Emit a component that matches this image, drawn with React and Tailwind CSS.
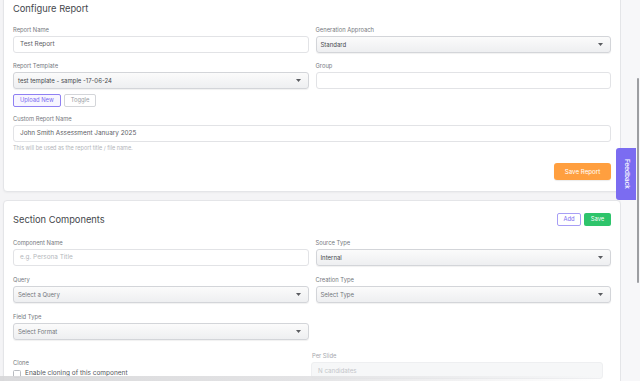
import React from "react";

function Label({ children, className = "" }) {
  return (
    <div className={"h-[9px] leading-[9px] text-[5.8px] text-[#75787e] mb-[2px] " + className}>
      {children}
    </div>
  );
}

function Input({ value, placeholder }) {
  return (
    <div className="h-[17px] rounded-[3px] border border-[#e2e3e6] bg-white flex items-center px-[6px] text-[6.4px]">
      {value ? (
        <span className="text-[#5d6066]">{value}</span>
      ) : (
        <span className="text-[#b4b7bc]">{placeholder}</span>
      )}
    </div>
  );
}

function Select({ value, muted }) {
  return (
    <div className="h-[17px] rounded-[3px] border border-[#d3d5d9] bg-gradient-to-b from-[#fbfbfb] to-[#eeeff1] shadow-[0_1px_1px_rgba(0,0,0,0.06)] flex items-center justify-between pl-[4px] pr-[7px] text-[6px]">
      <span className={muted ? "text-[#72757b]" : "text-[#45484d]"}>{value}</span>
      <svg width="5" height="3" viewBox="0 0 5 3">
        <path d="M0 0 L5 0 L2.5 3 Z" fill="#5a5c60" />
      </svg>
    </div>
  );
}

export default function App() {
  return (
    <div className="relative w-[640px] h-[381px] overflow-hidden bg-[#f4f4f6] font-['Inter',sans-serif]">
      <div className="flex">
        <div className="w-[621px] pl-[3px] -mt-[11px] flex flex-col gap-[8px]">
          {/* Card 1 */}
          <div className="rounded-[4px] border border-[#e4e5e8] bg-white px-[9px] pt-[12px] pb-[11px] shadow-[0_1px_2px_rgba(0,0,0,0.04)]">
            <div className="h-[13px] leading-[13px] text-[9.3px] text-[#45484d]">Configure Report</div>
            <div className="mt-[10px] grid grid-cols-2 gap-x-[7px] gap-y-[8px]">
              <div>
                <Label>Report Name</Label>
                <Input value="Test Report" />
              </div>
              <div>
                <Label>Generation Approach</Label>
                <Select value="Standard" />
              </div>
              <div>
                <Label>Report Template</Label>
                <Select value="test template - sample -17-06-24" />
                <div className="mt-[5px] flex gap-[3px]">
                  <div className="h-[13px] px-[6px] rounded-[2px] border border-[#8f80f3] bg-[#f7f5ff] text-[#7a6af0] text-[5.8px] flex items-center">
                    Upload New
                  </div>
                  <div className="h-[13px] px-[6px] rounded-[2px] border border-[#d3d5d9] bg-white text-[#9a9da3] text-[5.8px] flex items-center">
                    Toggle
                  </div>
                </div>
              </div>
              <div>
                <Label>Group</Label>
                <Input value="" placeholder="" />
              </div>
            </div>
            <div className="mt-[7px]">
              <Label>Custom Report Name</Label>
              <Input value="John Smith Assessment January 2025" />
              <div className="mt-[2px] h-[8px] leading-[8px] text-[5.5px] text-[#b2b5ba]">
                This will be used as the report title / file name.
              </div>
            </div>
            <div className="mt-[11px] flex justify-end">
              <div className="h-[17px] w-[57px] rounded-[3px] bg-[#ff9f3f] text-white text-[6.2px] flex items-center justify-center shadow-[0_1px_1px_rgba(0,0,0,0.08)]">
                Save Report
              </div>
            </div>
          </div>

          {/* Card 2 */}
          <div className="rounded-[4px] border border-[#e4e5e8] bg-white px-[9px] pt-[12px] pb-[11px] shadow-[0_1px_2px_rgba(0,0,0,0.04)]">
            <div className="flex items-center justify-between h-[13px]">
              <div className="leading-[13px] text-[9.3px] text-[#45484d]">Section Components</div>
              <div className="flex gap-[3px]">
                <div className="h-[13px] w-[24px] rounded-[2px] border border-[#a79ef5] bg-white text-[#7a6af0] text-[5.8px] flex items-center justify-center">
                  Add
                </div>
                <div className="h-[13px] w-[27px] rounded-[2px] bg-[#2ec46b] text-white text-[5.8px] flex items-center justify-center">
                  Save
                </div>
              </div>
            </div>
            <div className="mt-[12px] grid grid-cols-2 gap-x-[7px] gap-y-[9px]">
              <div>
                <Label>Component Name</Label>
                <Input placeholder="e.g. Persona Title" />
              </div>
              <div>
                <Label>Source Type</Label>
                <Select value="Internal" />
              </div>
              <div>
                <Label>Query</Label>
                <Select value="Select a Query" muted />
              </div>
              <div>
                <Label>Creation Type</Label>
                <Select value="Select Type" muted />
              </div>
              <div>
                <Label>Field Type</Label>
                <Select value="Select Format" muted />
              </div>
              <div />
            </div>
            <div className="mt-[11px] grid grid-cols-[295px_292px] gap-x-[3px]">
              <div className="pt-[7px]">
                <Label>Clone</Label>
                <div className="flex items-center gap-[4px]">
                  <div className="w-[8px] h-[8px] rounded-[1.5px] border border-[#b9bcc1] bg-white" />
                  <span className="text-[6.5px] text-[#55585d]">Enable cloning of this component</span>
                </div>
              </div>
              <div>
                <Label className="pl-[1px] text-[#a5a8ad]">Per Slide</Label>
                <div className="h-[17px] rounded-[3px] border border-[#eeeff1] bg-[#f6f7f8] flex items-center px-[6px] text-[6.2px] text-[#c3c5c9]">
                  N candidates
                </div>
              </div>
            </div>
          </div>
        </div>
        <div className="flex-1 relative bg-[#f7f7f9]">
          <div className="absolute right-[1px] top-[78px] w-[2px] h-[205px] rounded-full bg-[#9d9ea2]" />
        </div>
      </div>

      {/* Feedback tab */}
      <div className="absolute left-[616px] top-[148px] w-[20px] h-[52px] rounded-l-[3px] bg-[#7b6cf1] flex items-center justify-center">
        <span className="[writing-mode:vertical-rl] text-white text-[6.4px] font-medium">Feedback</span>
      </div>

      {/* bottom fade */}
      <div className="absolute left-0 bottom-0 w-[600px] h-[5px] bg-gradient-to-r from-[#d6d6d8] via-[#e0e0e2] to-transparent opacity-90" />
    </div>
  );
}
